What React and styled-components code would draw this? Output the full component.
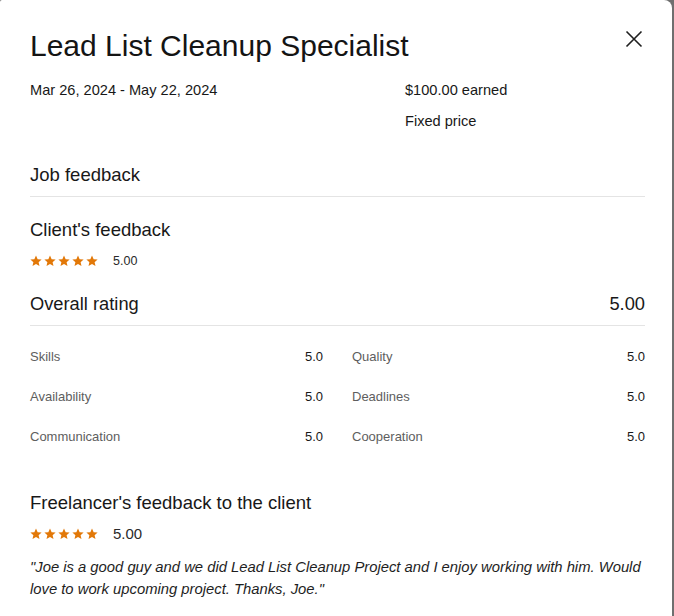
import React from 'react'
import styled, { createGlobalStyle } from 'styled-components'

const GlobalStyle = createGlobalStyle`
  html, body {
    margin: 0;
    padding: 0;
    background: #6f6f6f;
  }
  body {
    font-family: "Liberation Sans", Arial, sans-serif;
    color: #181818;
    -webkit-font-smoothing: antialiased;
  }
`

const Modal = styled.div`
  width: 672px;
  min-height: 616px;
  box-sizing: border-box;
  background: #fff;
  border-radius: 2px 8px 0 0;
  padding: 27px 27px 0 30px;
`

const Head = styled.div`
  display: flex;
  align-items: flex-start;
  justify-content: space-between;
`

const Title = styled.h1`
  margin: 0;
  font-size: 30px;
  font-weight: 400;
  line-height: 38px;
  color: #141414;
`

const CloseButton = styled.button`
  border: 0;
  background: transparent;
  padding: 0;
  margin: 3px 2px 0 0;
  width: 18px;
  height: 18px;
  cursor: pointer;
  color: #1f1f1f;
`

const Meta = styled.div`
  display: grid;
  grid-template-columns: 375px 1fr;
  margin-top: 15px;
  font-size: 14.6px;
  line-height: 20px;
`

const MetaCol = styled.div`
  display: flex;
  flex-direction: column;
  gap: 11px;
`

const SectionTitle = styled.h2`
  margin: 0;
  font-size: 18.5px;
  font-weight: 400;
  line-height: 24px;
  color: #181818;
`

const JobFeedback = styled(SectionTitle)`
  margin-top: 32px;
  padding-bottom: 9px;
  border-bottom: 1px solid #e4e4e4;
`

const ClientTitle = styled(SectionTitle)`
  margin-top: 21px;
`

const StarsRow = styled.div`
  display: flex;
  align-items: center;
  gap: 15px;
  margin-top: ${p => p.$top || 7}px;
  font-size: ${p => p.$size || 12}px;
  color: #2a2a2a;
`

const Stars = styled.div`
  display: flex;
  gap: 2px;
`

const OverallRow = styled.div`
  display: flex;
  justify-content: space-between;
  align-items: center;
  margin-top: 23px;
  padding-bottom: 8px;
  border-bottom: 1px solid #e4e4e4;
  font-size: 18.3px;
  line-height: 26px;
`

const RatingsGrid = styled.div`
  display: grid;
  grid-template-columns: 1fr 1fr;
  column-gap: 29px;
  row-gap: 20px;
  margin-top: 21px;
`

const RatingItem = styled.div`
  display: flex;
  justify-content: space-between;
  font-size: 13px;
  line-height: 20px;
`

const RatingLabel = styled.span`
  color: #5e5e5e;
`

const RatingValue = styled.span`
  color: #181818;
`

const FreelancerTitle = styled(SectionTitle)`
  margin-top: 44px;
`

const Quote = styled.p`
  margin: 14px 0 0;
  font-size: 14.8px;
  font-style: italic;
  line-height: 22px;
  color: #1e1e1e;
`

function Star() {
  return (
    <svg width="12" height="12" viewBox="0 0 24 24">
      <path
        fill="#e27808"
        d="M12 1l3.3 7.3 7.9.8-6 5.3 1.8 7.8L12 18.2l-7 4 1.8-7.8-6-5.3 7.9-.8z"
      />
    </svg>
  )
}

function StarRating({ value, size, top }) {
  return (
    <StarsRow $size={size} $top={top}>
      <Stars>
        {[0, 1, 2, 3, 4].map(i => <Star key={i} />)}
      </Stars>
      <span>{value}</span>
    </StarsRow>
  )
}

const ratings = [
  ['Skills', '5.0'],
  ['Quality', '5.0'],
  ['Availability', '5.0'],
  ['Deadlines', '5.0'],
  ['Communication', '5.0'],
  ['Cooperation', '5.0'],
]

export default function App() {
  return (
    <>
      <GlobalStyle />
      <Modal role="dialog" aria-label="Job details">
        <Head>
          <Title>Lead List Cleanup Specialist</Title>
          <CloseButton type="button" aria-label="Close">
            <svg width="18" height="18" viewBox="0 0 18 18">
              <path d="M1.5 1.5l15 15M16.5 1.5l-15 15" stroke="currentColor" strokeWidth="1.6" />
            </svg>
          </CloseButton>
        </Head>

        <Meta>
          <MetaCol>
            <span>Mar 26, 2024 - May 22, 2024</span>
          </MetaCol>
          <MetaCol>
            <span>$100.00 earned</span>
            <span>Fixed price</span>
          </MetaCol>
        </Meta>

        <JobFeedback>Job feedback</JobFeedback>

        <ClientTitle>Client's feedback</ClientTitle>
        <StarRating value="5.00" size={12.5} top={12} />

        <OverallRow>
          <span>Overall rating</span>
          <span>5.00</span>
        </OverallRow>

        <RatingsGrid>
          {ratings.map(([label, value]) => (
            <RatingItem key={label}>
              <RatingLabel>{label}</RatingLabel>
              <RatingValue>{value}</RatingValue>
            </RatingItem>
          ))}
        </RatingsGrid>

        <FreelancerTitle>Freelancer's feedback to the client</FreelancerTitle>
        <StarRating value="5.00" size={15} top={10} />

        <Quote>
          "Joe is a good guy and we did Lead List Cleanup Project and I enjoy working with him. Would
          love to work upcoming project. Thanks, Joe."
        </Quote>
      </Modal>
    </>
  )
}
